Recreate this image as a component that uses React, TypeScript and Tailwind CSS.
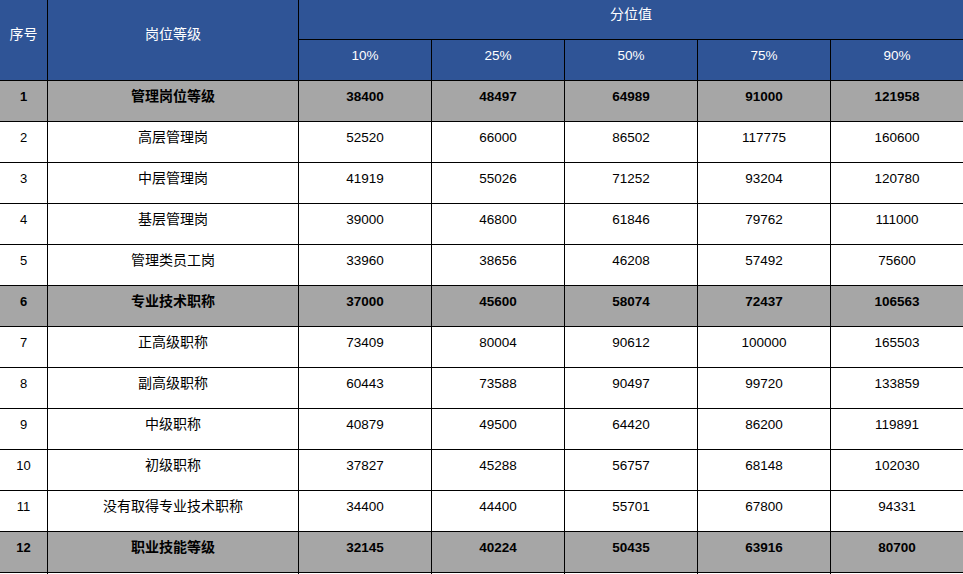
import React from "react";

type Row = { no: string; name: string; vals: string[]; bold?: boolean };

const rows: Row[] = [
  { no: "1", name: "管理岗位等级", vals: ["38400", "48497", "64989", "91000", "121958"], bold: true },
  { no: "2", name: "高层管理岗", vals: ["52520", "66000", "86502", "117775", "160600"] },
  { no: "3", name: "中层管理岗", vals: ["41919", "55026", "71252", "93204", "120780"] },
  { no: "4", name: "基层管理岗", vals: ["39000", "46800", "61846", "79762", "111000"] },
  { no: "5", name: "管理类员工岗", vals: ["33960", "38656", "46208", "57492", "75600"] },
  { no: "6", name: "专业技术职称", vals: ["37000", "45600", "58074", "72437", "106563"], bold: true },
  { no: "7", name: "正高级职称", vals: ["73409", "80004", "90612", "100000", "165503"] },
  { no: "8", name: "副高级职称", vals: ["60443", "73588", "90497", "99720", "133859"] },
  { no: "9", name: "中级职称", vals: ["40879", "49500", "64420", "86200", "119891"] },
  { no: "10", name: "初级职称", vals: ["37827", "45288", "56757", "68148", "102030"] },
  { no: "11", name: "没有取得专业技术职称", vals: ["34400", "44400", "55701", "67800", "94331"] },
  { no: "12", name: "职业技能等级", vals: ["32145", "40224", "50435", "63916", "80700"], bold: true },
];

const pct = ["10%", "25%", "50%", "75%", "90%"];

const sans = "font-['Liberation_Sans','Noto_Sans_CJK_SC',sans-serif]";
const cjk = "font-['Noto_Sans_CJK_SC','Liberation_Sans',sans-serif]";

export default function App() {
  return (
    <div className="h-[574px] w-[963px] overflow-hidden bg-white">
      <div className="grid grid-cols-[47px_250px_132px_132px_132px_132px_132px] gap-px bg-black">
        {/* header */}
        <div className={`row-span-2 flex items-center justify-center pb-[13px] bg-[#2F5496] text-white text-[14px] ${cjk}`}>
          序号
        </div>
        <div className={`row-span-2 flex items-center justify-center pb-[13px] bg-[#2F5496] text-white text-[14px] ${cjk}`}>
          岗位等级
        </div>
        <div className={`col-span-5 h-[39px] flex items-center justify-center pb-[12px] bg-[#2F5496] text-white text-[14px] ${cjk}`}>
          分位值
        </div>
        {pct.map((p) => (
          <div
            key={p}
            className={`h-[40px] flex items-center justify-center pb-2 bg-[#2F5496] text-white text-[13.5px] ${sans}`}
          >
            {p}
          </div>
        ))}
        {rows.map((r) => {
          const bg = r.bold ? "bg-[#A6A6A6]" : "bg-white";
          const fw = r.bold ? "font-bold" : "font-normal";
          return (
            <React.Fragment key={r.no}>
              <div className={`h-[40px] flex items-center justify-center pb-2 ${bg} ${fw} text-black text-[13px] ${sans}`}>
                {r.no}
              </div>
              <div className={`h-[40px] flex items-center justify-center pb-[12px] ${bg} ${fw} text-black text-[14px] ${cjk}`}>
                {r.name}
              </div>
              {r.vals.map((v, i) => (
                <div
                  key={i}
                  className={`h-[40px] flex items-center justify-center pb-2 ${bg} ${fw} text-black text-[13.5px] ${sans}`}
                >
                  {v}
                </div>
              ))}
            </React.Fragment>
          );
        })}
        {Array.from({ length: 7 }).map((_, i) => (
          <div key={`e${i}`} className="h-[40px] bg-white" />
        ))}
      </div>
    </div>
  );
}
